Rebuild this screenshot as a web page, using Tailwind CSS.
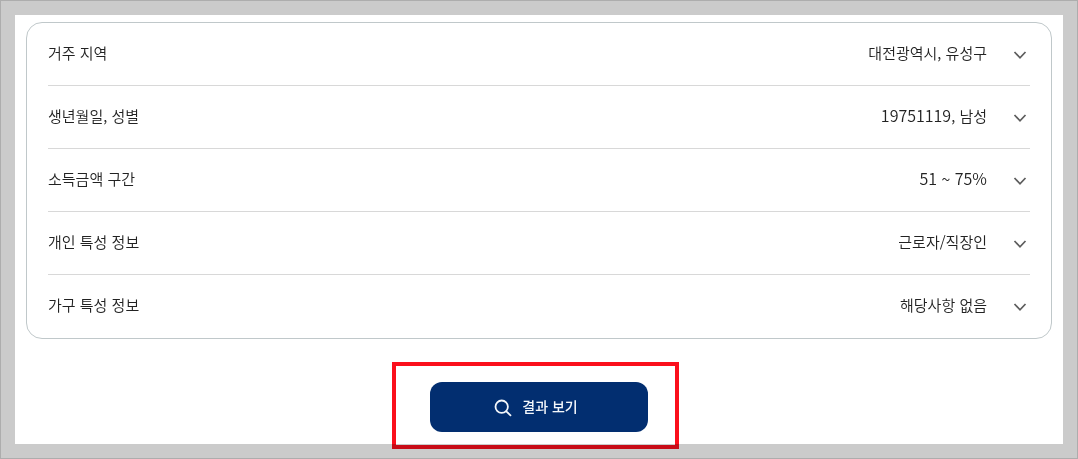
<!DOCTYPE html>
<html lang="ko">
<head>
<meta charset="utf-8">
<meta name="viewport" content="width=device-width, initial-scale=1">
<title>결과 보기</title>
<script src="https://cdn.jsdelivr.net/npm/@tailwindcss/browser@4"></script>
</head>
<body class="min-h-screen flex border border-[#adadad] bg-[#cbcbcb] p-3.5 font-['Noto_Sans_CJK_KR',sans-serif] text-[#222222]">
<svg class="hidden">
  <symbol id="chevron" viewBox="0 0 14 14"><path d="M1.5 4 7 9.8 12.5 4" fill="none" stroke="currentColor" stroke-width="1.7"/></symbol>
</svg>
<main class="grow bg-white px-[11px] pt-[7px] pb-3">
  <div class="rounded-2xl border border-[#c0c8ca] px-[21px] text-[15px] leading-[22px] font-[350] divide-y divide-[#d8d8d8]">
    <button type="button" class="flex w-full items-center pt-[19px] pb-[21px] pr-[3px]">
      <span class="grow text-left">거주 지역</span><span>대전광역시, 유성구</span>
      <svg class="ml-[26px] mt-[3px] size-3.5 text-[#5c5c5c]"><use href="#chevron"/></svg>
    </button>
    <button type="button" class="flex w-full items-center pt-[19px] pb-[21px] pr-[3px]">
      <span class="grow text-left">생년월일, 성별</span><span><span class="text-base leading-none">19751119</span>, 남성</span>
      <svg class="ml-[26px] mt-[3px] size-3.5 text-[#5c5c5c]"><use href="#chevron"/></svg>
    </button>
    <button type="button" class="flex w-full items-center pt-[19px] pb-[21px] pr-[3px]">
      <span class="grow text-left">소득금액 구간</span><span><span class="text-base leading-none">51 ~ 75%</span></span>
      <svg class="ml-[26px] mt-[3px] size-3.5 text-[#5c5c5c]"><use href="#chevron"/></svg>
    </button>
    <button type="button" class="flex w-full items-center pt-[19px] pb-[21px] pr-[3px]">
      <span class="grow text-left">개인 특성 정보</span><span>근로자/직장인</span>
      <svg class="ml-[26px] mt-[3px] size-3.5 text-[#5c5c5c]"><use href="#chevron"/></svg>
    </button>
    <button type="button" class="flex w-full items-center pt-[19px] pb-[22px] pr-[3px]">
      <span class="grow text-left">가구 특성 정보</span><span>해당사항 없음</span>
      <svg class="ml-[26px] mt-[3px] size-3.5 text-[#5c5c5c]"><use href="#chevron"/></svg>
    </button>
  </div>
  <div class="relative mx-auto mt-[43px] w-[218px]">
    <button type="button" class="flex h-[50px] w-full items-center justify-center gap-2.5 rounded-xl bg-[#022e70] pr-1.5 pb-0.5 text-sm font-medium text-[#f4f7fb]">
      <svg class="mt-1 size-[18px]" viewBox="0 0 18 18" fill="none" stroke="currentColor" stroke-width="1.8" stroke-linecap="round"><circle cx="7.7" cy="7.7" r="6.2"/><path d="m12.3 12.3 4.2 4"/></svg>
      <span>결과 보기</span>
    </button>
    <!-- highlight frame around the result button -->
    <div class="pointer-events-none absolute -top-5 -bottom-[17px] -left-[38px] -right-[31px] border-4 border-[#fb0f1c] mix-blend-multiply"></div>
  </div>
</main>
</body>
</html>
